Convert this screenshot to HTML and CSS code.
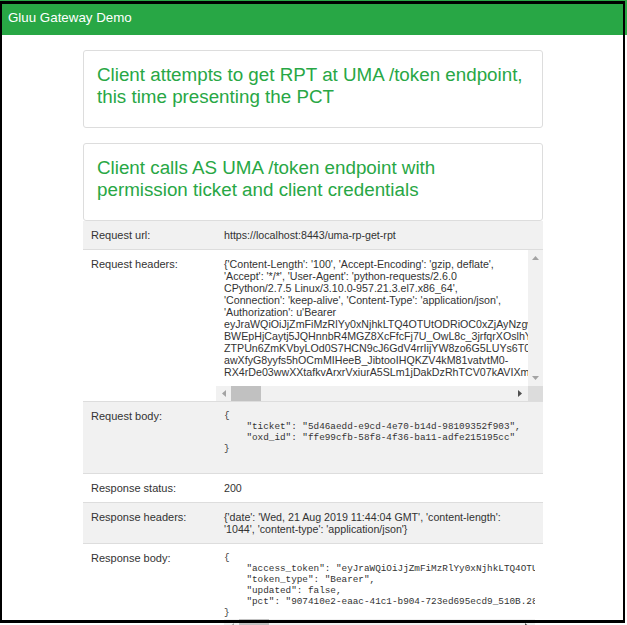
FILE: index.html
```html
<!DOCTYPE html>
<html lang="en">
<head>
  <meta charset="UTF-8">
  <title>Gluu Gateway Demo</title>
  <link rel="stylesheet" href="styles.css">
</head>
<body>

  <div class="frame"></div>

  <div class="navbar">Gluu Gateway Demo</div>

  <div class="container">
    <div class="panel">
      <h3>Client attempts to get RPT at UMA /token endpoint, this time presenting the PCT</h3>
    </div>

    <div class="panel panel-last">
      <h3>Client calls AS UMA /token endpoint with<br>permission ticket and client credentials</h3>
    </div>

    <div class="row alt">
      <div class="label">Request url:</div>
      <div class="value">https://localhost:8443/uma-rp-get-rpt</div>
    </div>

    <div class="row">
      <div class="label">Request headers:</div>
      <div class="scrollbox">
        <div class="scroll-text">{'Content-Length': '100', 'Accept-Encoding': 'gzip, deflate',
'Accept': '*/*', 'User-Agent': 'python-requests/2.6.0
CPython/2.7.5 Linux/3.10.0-957.21.3.el7.x86_64',
'Connection': 'keep-alive', 'Content-Type': 'application/json',
'Authorization': u'Bearer
eyJraWQiOiJjZmFiMzRlYy0xNjhkLTQ4OTUtODRiOC0xZjAyNzgwMjM4
BWEpHjCaytj5JQHnnbR4MGZ8XcFfcFj7U_OwL8c_3jrfqrXOslhYwQ2k
ZTPUn6ZmKVbyLOd0S7HCN9cJ6GdV4rrIijYW8zo6G5LUYs6T0qLm
awXfyG8yyfs5hOCmMIHeeB_JibtooIHQKZV4kM81vatvtM0-
RX4rDe03wwXXtafkvArxrVxiurA5SLm1jDakDzRhTCV07kAVIXmQw</div>
        <div class="vbar">
          <svg width="15" height="15" viewBox="0 0 15 15"><path d="M4 10h7L7.500 6z" fill="#a3a3a3"/></svg>
          <svg width="15" height="15" viewBox="0 0 15 15"><path d="M4 5h7L7.500 9z" fill="#a3a3a3"/></svg>
        </div>
        <div class="hbar">
          <svg width="15" height="15" viewBox="0 0 15 15"><path d="M10 4v7L6 7.500z" fill="#a3a3a3"/></svg>
          <div class="track"><div class="thumb"></div></div>
          <svg width="15" height="15" viewBox="0 0 15 15"><path d="M5 4v7l4-3.500z" fill="#505050"/></svg>
        </div>
        <div class="corner"></div>
      </div>
    </div>

    <div class="row alt row-request-body">
      <div class="label">Request body:</div>
      <pre class="value code">{
    "ticket": "5d46aedd-e9cd-4e70-b14d-98109352f903",
    "oxd_id": "ffe99cfb-58f8-4f36-ba11-adfe215195cc"
}</pre>
    </div>

    <div class="row">
      <div class="label">Response status:</div>
      <div class="value">200</div>
    </div>

    <div class="row alt">
      <div class="label">Response headers:</div>
      <div class="value">{'date': 'Wed, 21 Aug 2019 11:44:04 GMT', 'content-length':<br>'1044', 'content-type': 'application/json'}</div>
    </div>

    <div class="row">
      <div class="label">Response body:</div>
      <div class="value value-scroll">
        <pre class="code code-clip">{
    "access_token": "eyJraWQiOiJjZmFiMzRlYy0xNjhkLTQ4OTUtODRiOC0xZjAyNzg",
    "token_type": "Bearer",
    "updated": false,
    "pct": "907410e2-eaac-41c1-b904-723ed695ecd9_510B.28F1C0A3-44E0-4B"
}</pre>
        <div class="hbar">
          <svg width="15" height="15" viewBox="0 0 15 15"><path d="M10 4v7L6 7.500z" fill="#a3a3a3"/></svg>
          <div class="track"><div class="thumb"></div></div>
          <svg width="15" height="15" viewBox="0 0 15 15"><path d="M5 4v7l4-3.500z" fill="#505050"/></svg>
        </div>
      </div>
    </div>
  </div>

</body>
</html>
```

FILE: styles.css
```css
html, body {
  height: 625px;
  overflow: hidden;
}
body {
  margin: 0;
  background: #fff;
  color: #333;
  font-family: "Liberation Sans", Arial, sans-serif;
  font-size: 12px;
  line-height: 12px;
  position: relative;
}
.frame {
  position: absolute;
  left: 0;
  top: 1px;
  width: 625px;
  height: 622px;
  box-sizing: border-box;
  border: solid #000;
  border-width: 3px 2.500px 3px 2px;
  z-index: 5;
}
.navbar {
  height: 31px;
  padding: 4px 0 0 8px;
  background: #28a745;
  color: #fff;
  font-size: 13.330px;
  line-height: 27px;
}
.container {
  width: 460px;
  margin: 15px 0 0 83px;
}
.panel {
  border: 1px solid #ddd;
  border-radius: 3px;
  padding: 13px 13px 19px;
  margin-bottom: 15px;
}
.panel-last {
  margin-bottom: 0;
}
h3 {
  margin: 0;
  color: #28a745;
  font-size: 18.800px;
  font-weight: normal;
  line-height: 22px;
}
.row {
  display: grid;
  grid-template-columns: 133px 327px;
  border-bottom: 1px solid #ddd;
}
.alt {
  background: #f1f1f1;
}
.label {
  padding: 8px;
  font-size: 11px;
}
.value {
  padding: 8px;
  font-size: 10.670px;
}
.code {
  margin: 0;
  font-family: "Liberation Mono", "Courier New", monospace;
  font-size: 9.330px;
  line-height: 11px;
}
.row-request-body {
  height: 71px;
}
.scrollbox {
  display: grid;
  grid-template-columns: 312px 15px;
  grid-template-rows: 136px 15px;
  font-size: 10.670px;
}
.scroll-text {
  padding: 8px;
  overflow: hidden;
  white-space: pre;
}
.vbar {
  display: flex;
  flex-direction: column;
  justify-content: space-between;
  background: #f1f1f1;
}
.hbar {
  display: flex;
  height: 15px;
  background: #f1f1f1;
}
.track {
  flex: 1;
}
.thumb {
  width: 30px;
  height: 15px;
  background: #c1c1c1;
}
.corner {
  background: #dcdcdc;
}
.value-scroll {
  width: 311px;
  padding-right: 0;
}
.code-clip {
  overflow: hidden;
  height: 67px;
  font-size: 9.330px;
}
```
